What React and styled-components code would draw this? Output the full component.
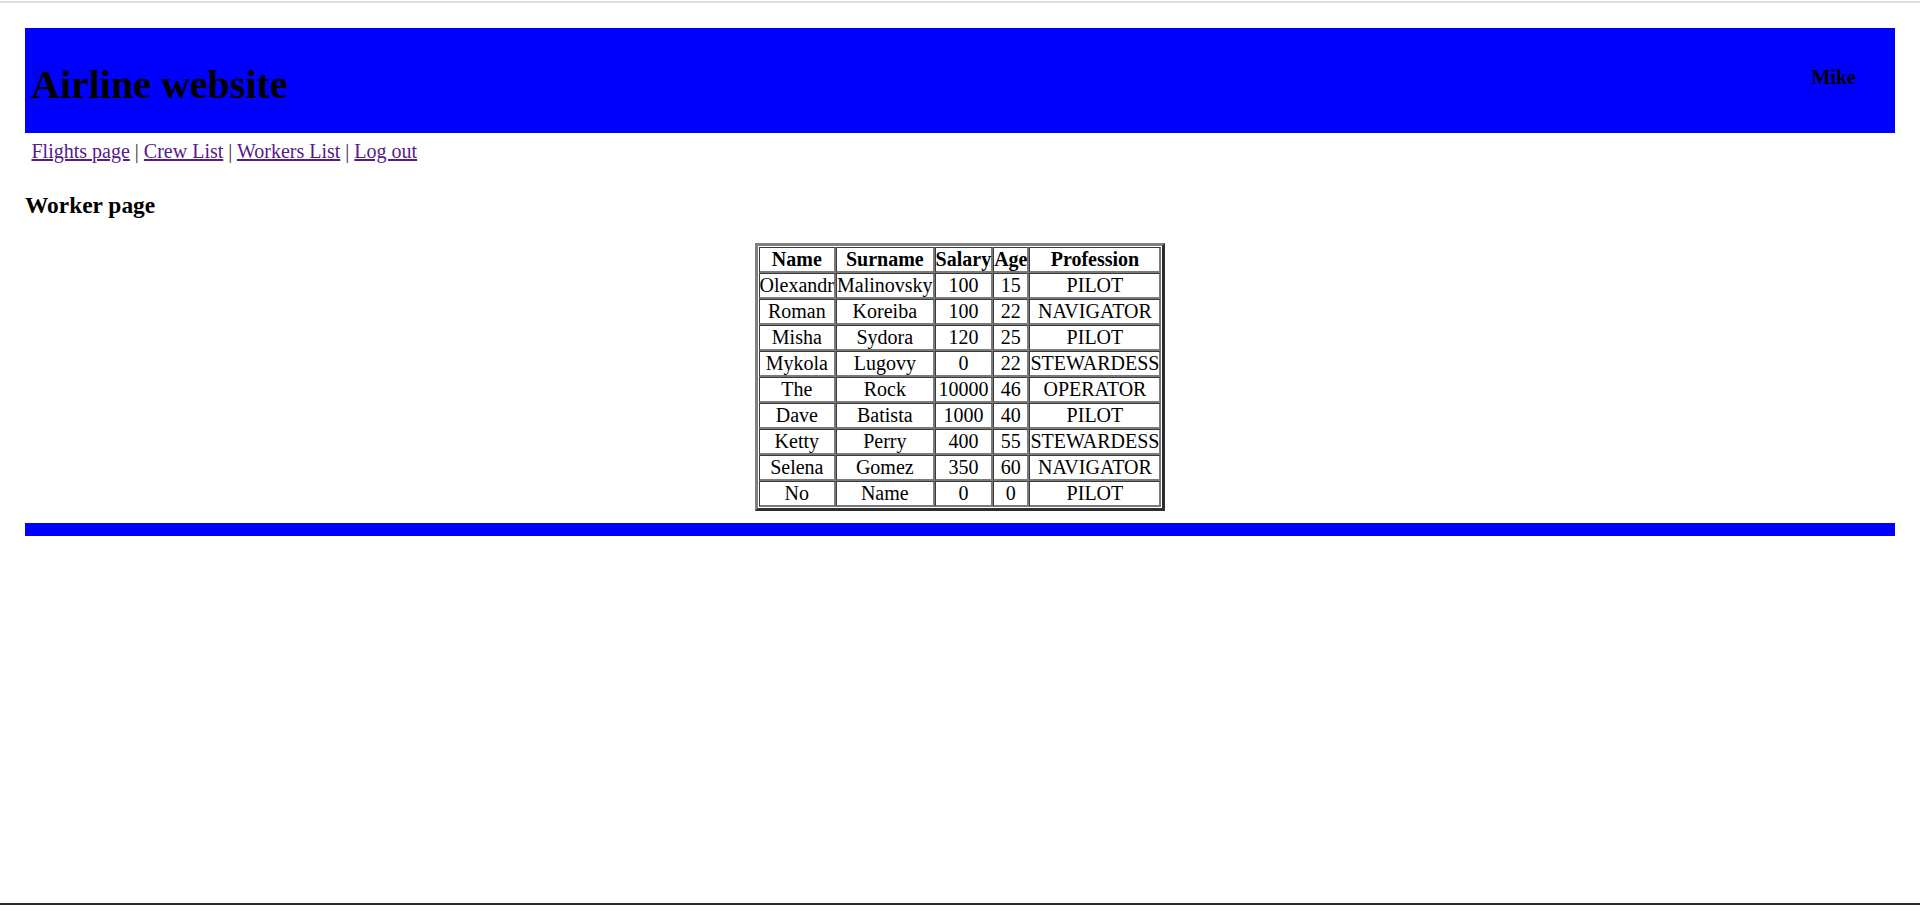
import React from "react";
import styled, { createGlobalStyle } from "styled-components";

const GlobalStyle = createGlobalStyle`
  html, body {
    margin: 0;
    padding: 0;
    background: #ffffff;
  }
  body {
    font-family: "Liberation Serif", "Times New Roman", serif;
    color: #000000;
  }
`;

const Page = styled.div`
  min-height: 100vh;
  box-sizing: border-box;
  display: flex;
  flex-direction: column;
`;

const TopEdge = styled.div`
  margin-top: 1px;
  height: 2px;
  background: #dcdce0;
`;

const BottomEdge = styled.div`
  margin-top: auto;
  height: 2px;
  background: #2b2b2b;
`;

const Content = styled.div`
  padding: 25px 25px 0;
  display: flex;
  flex-direction: column;
`;

const Header = styled.header`
  height: 105px;
  box-sizing: border-box;
  background: #0000ff;
  display: flex;
  justify-content: space-between;
  align-items: flex-start;
  padding: 7px 6px 0;
`;

const Title = styled.h1`
  margin: 27px 0 0;
  font-size: 40px;
  font-weight: bold;
  line-height: 46px;
`;

const UserName = styled.div`
  margin: 31px 33px 0 0;
  font-size: 20px;
  font-weight: bold;
  line-height: 23px;
`;

const Nav = styled.nav`
  padding: 7px 6.5px 6px;
  font-size: 20px;
  line-height: 23px;
`;

const NavLink = styled.a`
  color: #551a8b;
  text-decoration: underline;
`;

const Separator = styled.span`
  color: #333333;
`;

const SectionTitle = styled.h3`
  margin: 23px 0 23.5px;
  font-size: 23.4px;
  font-weight: bold;
  line-height: 27px;
`;

const Table = styled.table`
  margin: 0 auto;
  border-style: solid;
  border-width: 3px;
  border-color: #808080 #2e2e2e #2e2e2e #808080;
  border-spacing: 0;
  padding: 1px;
  font-size: 20px;
  line-height: 23px;
`;

const cellBorder = `
  padding: 0;
  text-align: center;
  border-style: solid;
  border-width: 1px 2px 2px 1px;
  border-color: #3a3a3a #7a7a7a #7a7a7a #3a3a3a;
`;

const HeadCell = styled.th`
  ${cellBorder}
  font-weight: bold;
`;

const Cell = styled.td`
  ${cellBorder}
`;

const FooterBar = styled.div`
  margin-top: 12px;
  height: 13px;
  background: #0000ff;
`;

const workers = [
  ["Olexandr", "Malinovsky", 100, 15, "PILOT"],
  ["Roman", "Koreiba", 100, 22, "NAVIGATOR"],
  ["Misha", "Sydora", 120, 25, "PILOT"],
  ["Mykola", "Lugovy", 0, 22, "STEWARDESS"],
  ["The", "Rock", 10000, 46, "OPERATOR"],
  ["Dave", "Batista", 1000, 40, "PILOT"],
  ["Ketty", "Perry", 400, 55, "STEWARDESS"],
  ["Selena", "Gomez", 350, 60, "NAVIGATOR"],
  ["No", "Name", 0, 0, "PILOT"],
];

const links = ["Flights page", "Crew List", "Workers List", "Log out"];

export default function App() {
  return (
    <>
      <GlobalStyle />
      <Page>
        <TopEdge />
        <Content>
          <Header>
            <Title>Airline website</Title>
            <UserName>Mike</UserName>
          </Header>
          <Nav>
            {links.map((l, i) => (
              <React.Fragment key={l}>
                {i > 0 && <Separator> | </Separator>}
                <NavLink href="#">{l}</NavLink>
              </React.Fragment>
            ))}
          </Nav>
          <SectionTitle>Worker page</SectionTitle>
          <Table>
            <thead>
              <tr>
                <HeadCell>Name</HeadCell>
                <HeadCell>Surname</HeadCell>
                <HeadCell>Salary</HeadCell>
                <HeadCell>Age</HeadCell>
                <HeadCell>Profession</HeadCell>
              </tr>
            </thead>
            <tbody>
              {workers.map((w, i) => (
                <tr key={i}>
                  {w.map((v, j) => (
                    <Cell key={j}>{v}</Cell>
                  ))}
                </tr>
              ))}
            </tbody>
          </Table>
          <FooterBar />
        </Content>
        <BottomEdge />
      </Page>
    </>
  );
}
